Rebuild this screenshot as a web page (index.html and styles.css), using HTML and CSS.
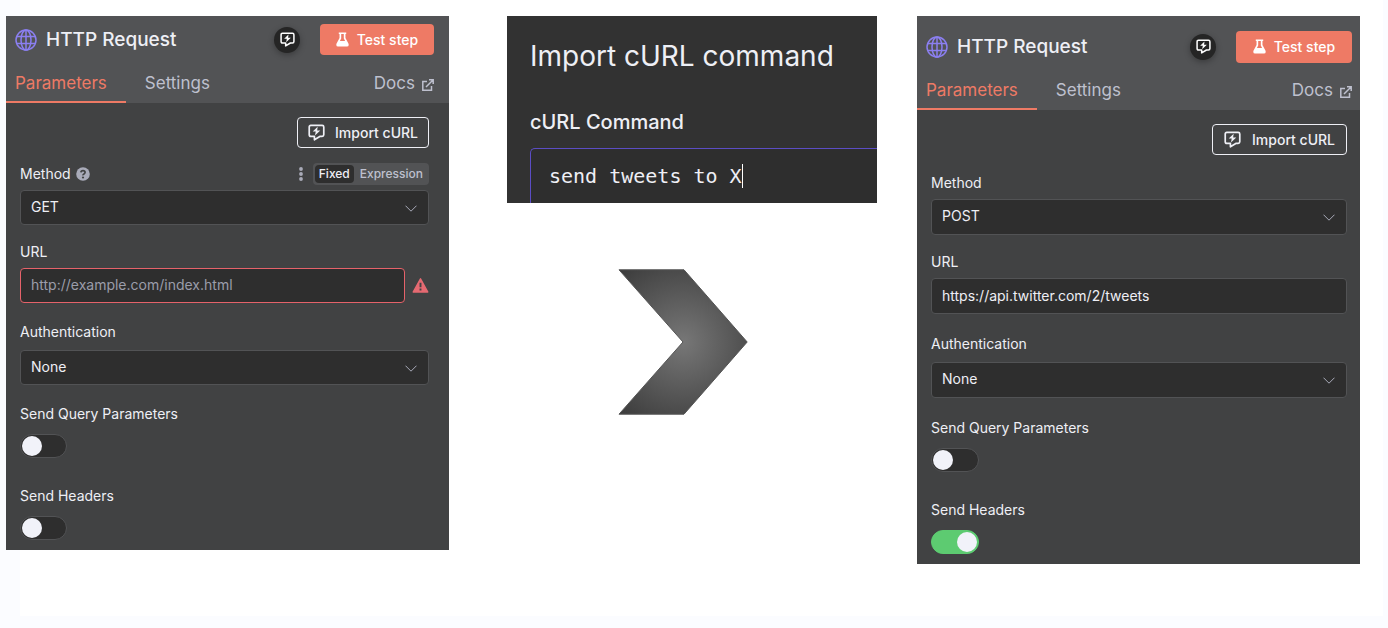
FILE: index.html
```
<!DOCTYPE html>
<html lang="en">
<head>
    <meta charset="UTF-8">
    <meta name="viewport" content="width=device-width, initial-scale=1.0">
    <title>HTTP Request - Import cURL</title>
    <link rel="stylesheet" href="styles.css">
</head>
<body>
    <!-- shared icons -->
    <svg class="sprite" aria-hidden="true">
        <symbol id="globe" viewBox="0 0 22 22">
            <g fill="none" stroke="currentColor" stroke-width="1.5">
                <circle cx="11" cy="11" r="10"/>
                <ellipse cx="11" cy="11" rx="5" ry="10"/>
                <path d="M11 1v20M2 7.5h18M2 14.5h18"/>
            </g>
        </symbol>
        <symbol id="bolt-chat" viewBox="0 0 18 18">
            <path d="M3 1.5h12q1.7 0 1.7 1.7v8.3q0 1.7-1.7 1.7h-2.500L6.800 16.700v-3.500H3q-1.700 0-1.700-1.700V3.200Q1.300 1.500 3 1.500z" fill="none" stroke="currentColor" stroke-width="1.8" stroke-linejoin="round"/>
            <path d="M10.200 3L5 8h3.200l-.8 4.300L13 7H9.700z" fill="currentColor"/>
        </symbol>
        <symbol id="flask" viewBox="0 0 14 16">
            <path d="M3 .5h8v1.600h-.8v4.400l3.300 6.200Q14.200 15.500 11.800 15.500H2.200Q-.2 15.500.5 12.700L3.800 6.500V2.100H3zM5.600 2.100v4.800L4.200 9.500h5.600L8.400 6.900V2.100z" fill="currentColor" fill-rule="evenodd"/>
        </symbol>
        <symbol id="external" viewBox="0 0 12 12">
            <path d="M5 2.500H.8v8.700h8.700V7M4 8l7-7M7 .8h4.200V5" fill="none" stroke="currentColor" stroke-width="1.500"/>
        </symbol>
        <symbol id="chevron" viewBox="0 0 12 7">
            <path d="M.5.700L6 6.200 11.500.7" fill="none" stroke="currentColor" stroke-width="1"/>
        </symbol>
    </svg>

    <main class="board">
        <section class="panel panel-before">
            <header class="panel-header">
                <div class="title-row">
                    <svg class="globe"><use href="#globe"/></svg>
                    <h2>HTTP Request</h2>
                    <button class="ask" type="button" aria-label="Ask assistant"><svg><use href="#bolt-chat"/></svg></button>
                    <button class="test" type="button"><svg><use href="#flask"/></svg>Test step</button>
                </div>
                <nav class="tabs">
                    <a class="tab active" href="#">Parameters</a>
                    <a class="tab" href="#">Settings</a>
                    <a class="docs" href="#">Docs <svg><use href="#external"/></svg></a>
                </nav>
            </header>
            <form class="panel-body">
                <button class="import" type="button"><svg><use href="#bolt-chat"/></svg>Import cURL</button>
                <div class="field compact first">
                    <div class="label-row">
                        <label for="method-a">Method</label>
                        <svg class="help" viewBox="0 0 14 14">
                            <circle cx="7" cy="7" r="6.800" fill="#a9abb9"/>
                            <path d="M4.900 5.400Q5 3.600 7 3.600T9.100 5.300Q9.100 6.300 8 6.900T7 8.400" fill="none" stroke="#414243" stroke-width="1.700"/>
                            <circle cx="7" cy="10.500" r="1.100" fill="#414243"/>
                        </svg>
                        <svg class="dots" viewBox="0 0 4 14"><circle cx="2" cy="2" r="1.900"/><circle cx="2" cy="7" r="1.900"/><circle cx="2" cy="12" r="1.900"/></svg>
                        <div class="mode">
                            <button class="on" type="button">Fixed</button>
                            <button type="button">Expression</button>
                        </div>
                    </div>
                    <div class="select">
                        <select id="method-a"><option>GET</option></select>
                        <svg><use href="#chevron"/></svg>
                    </div>
                </div>
                <div class="field compact">
                    <label for="url-a">URL</label>
                    <div class="invalid">
                        <input class="text" id="url-a" type="text" placeholder="http://example.com/index.html">
                        <svg class="warn" viewBox="0 0 16 15">
                            <path d="M8 .8L15.300 14H.7z" fill="#e56a72" stroke="#e56a72" stroke-width="1.400" stroke-linejoin="round"/>
                            <path d="M8 4.800v4.400M8 10.600v2" stroke="#414243" stroke-width="1.900"/>
                        </svg>
                    </div>
                </div>
                <div class="field">
                    <label for="auth-a">Authentication</label>
                    <div class="select">
                        <select id="auth-a"><option>None</option></select>
                        <svg><use href="#chevron"/></svg>
                    </div>
                </div>
                <div class="field">
                    <label for="query-a">Send Query Parameters</label>
                    <input class="switch" id="query-a" type="checkbox">
                </div>
                <div class="field after-switch">
                    <label for="headers-a">Send Headers</label>
                    <input class="switch" id="headers-a" type="checkbox">
                </div>
            </form>
        </section>

        <div class="middle">
            <section class="dialog">
                <h1>Import cURL command</h1>
                <label for="curl">cURL Command</label>
                <div class="editor">
                    <textarea id="curl" spellcheck="false">send tweets to X</textarea>
                    <span class="caret"></span>
                </div>
            </section>
            <svg class="arrow" viewBox="0 0 130 146">
                <defs>
                    <radialGradient id="steel" gradientUnits="userSpaceOnUse" cx="65" cy="73" r="98">
                        <stop offset="0" stop-color="#777"/>
                        <stop offset="1" stop-color="#3a3a3a"/>
                    </radialGradient>
                </defs>
                <path d="M1 .8h65L129.200 73 66 145.200H1L65 73z" fill="url(#steel)" stroke="#555" stroke-width="1"/>
            </svg>
        </div>

        <section class="panel panel-after">
            <header class="panel-header">
                <div class="title-row">
                    <svg class="globe"><use href="#globe"/></svg>
                    <h2>HTTP Request</h2>
                    <button class="ask" type="button" aria-label="Ask assistant"><svg><use href="#bolt-chat"/></svg></button>
                    <button class="test" type="button"><svg><use href="#flask"/></svg>Test step</button>
                </div>
                <nav class="tabs">
                    <a class="tab active" href="#">Parameters</a>
                    <a class="tab" href="#">Settings</a>
                    <a class="docs" href="#">Docs <svg><use href="#external"/></svg></a>
                </nav>
            </header>
            <form class="panel-body">
                <button class="import" type="button"><svg><use href="#bolt-chat"/></svg>Import cURL</button>
                <div class="field compact first">
                    <label for="method-b">Method</label>
                    <div class="select">
                        <select id="method-b"><option>POST</option></select>
                        <svg><use href="#chevron"/></svg>
                    </div>
                </div>
                <div class="field compact">
                    <label for="url-b">URL</label>
                    <input class="text" id="url-b" type="text" value="https://api.twitter.com/2/tweets">
                </div>
                <div class="field">
                    <label for="auth-b">Authentication</label>
                    <div class="select">
                        <select id="auth-b"><option>None</option></select>
                        <svg><use href="#chevron"/></svg>
                    </div>
                </div>
                <div class="field">
                    <label for="query-b">Send Query Parameters</label>
                    <input class="switch" id="query-b" type="checkbox">
                </div>
                <div class="field after-switch">
                    <label for="headers-b">Send Headers</label>
                    <input class="switch" id="headers-b" type="checkbox" checked>
                </div>
            </form>
        </section>
    </main>
</body>
</html>
```
FILE: styles.css
```
* { box-sizing: border-box; margin: 0; padding: 0; }
body { font-family: Inter, "Liberation Sans", sans-serif; font-size: 14px; line-height: 20px; background: #fbfcff; color: #eeeff5; }
button, input, select, textarea { font: inherit; color: inherit; }
button { border: none; cursor: pointer; }
a { text-decoration: none; }
svg { display: block; flex: none; }
.sprite { position: absolute; width: 0; height: 0; }

.board { display: flex; align-items: flex-start; min-height: calc(100vh - 12px); margin: 0 5px 12px 20px; padding: 16px 23px 16px 0; background: #fff; }

/* node panels */
.panel { --control: 35px; --gap: 19px; --left: 14px; --right: 20px; flex: 443 1 0; min-width: 0; background: #414243; }
.panel-before { margin-left: -14px; }
.panel-after { --control: 36px; --gap: 20px; --left: 14px; --right: 13px; }
.panel-header { background: #525355; }
.title-row { display: flex; align-items: center; height: 47px; padding: 0 15px 0 9px; }
.panel-after .title-row { height: 61px; padding-right: 8px; }
.globe { width: 22px; height: 22px; color: #8b7ff0; }
.title-row h2 { flex: 1; margin-left: 9px; font-size: 19px; line-height: 24px; font-weight: 500; }
.ask { display: flex; align-items: center; justify-content: center; width: 26px; height: 26px; margin-right: 20px; border-radius: 50%; background: #252525; color: #fff; box-shadow: 0 2px 6px rgba(0,0,0,0.3); }
.ask svg { width: 15px; height: 15px; }
.test { display: flex; align-items: center; justify-content: center; gap: 8px; width: 114px; height: 31px; border-radius: 4px; background: #ee7a65; color: #fff; font-weight: 500; }
.panel-after .test { width: 116px; height: 32px; }
.test svg { width: 13px; height: 15px; }

.tabs { display: flex; height: 40px; padding-right: 15px; font-size: 17px; line-height: 40px; }
.panel-after .tabs { height: 33px; padding-right: 8px; line-height: 26px; }
.tab { padding: 0 19px; color: #bec0ce; }
.tab.active { padding-left: 9px; border-bottom: 2px solid #ee7a65; color: #ee7a65; }
.docs { display: flex; gap: 7px; align-items: center; align-self: flex-start; margin-left: auto; color: #bec0ce; }
.docs svg { width: 12px; height: 12px; margin-top: 3px; }

.panel-body { display: flex; flex-direction: column; padding: 14px var(--right) 10px var(--left); }
.import { display: flex; align-items: center; align-self: flex-end; gap: 10px; height: 31px; padding: 0 10px; border: 1px solid #eeeff5; border-radius: 4px; background: none; font-weight: 500; }
.panel-after .import { gap: 11px; padding: 0 11px; }
.import svg { width: 17px; height: 17px; }
.field { display: flex; flex-direction: column; gap: 8px; margin-top: var(--gap); }
.field.compact { gap: 6px; margin-top: 17px; }
.panel-before .field.first { margin-top: 16px; }
.panel-after .field.first { margin-top: 18px; }
.field.after-switch { margin-top: 28px; }
.label-row { display: flex; align-items: center; height: 20px; }
.help { width: 14px; height: 14px; margin-left: 5px; }
.dots { width: 4px; height: 14px; margin-left: auto; fill: #a9abb9; }
.mode { display: flex; gap: 2px; margin-left: 10px; padding: 2px; border-radius: 4px; background: #525355; font-size: 12px; line-height: 18px; }
.mode button { padding: 0 4px; border-radius: 4px; background: none; color: #bec0ce; font-weight: 500; }
.mode .on { background: #2e2e2e; color: #eeeff5; }

.select { position: relative; }
.select select, .text { display: block; width: 100%; height: var(--control); padding: 0 10px 2px; border: 1px solid #525355; border-radius: 4px; background: #2e2e2e; outline: none; appearance: none; }
.select svg { position: absolute; top: calc(50% - 3px); right: 12px; width: 12px; height: 7px; color: #a9abb9; pointer-events: none; }
.invalid { display: flex; align-items: center; gap: 7px; }
.invalid .text { flex: 1; border-color: #e5626a; }
.text::placeholder { color: #9b9daa; opacity: 1; }
.warn { width: 17px; height: 15px; }

.switch { position: relative; width: 47px; height: 24px; margin-top: 2px; border: 1px solid #525355; border-radius: 12px; background: #2e2e2e; appearance: none; }
.switch::before { content: ''; position: absolute; top: 1px; left: 1px; width: 20px; height: 20px; border-radius: 50%; background: #f1f2f9; }
.panel-after .switch { width: 48px; }
.switch:checked { border-color: #5dcb71; background: #5dcb71; }
.switch:checked::before { left: auto; right: 1px; }

/* import dialog */
.middle { flex: 370 1 0; min-width: 0; margin: 0 40px 0 58px; }
.dialog { padding: 20px 0 0 23px; background: #323232; overflow: hidden; }
.dialog h1 { font-size: 28px; line-height: 40px; font-weight: 400; white-space: nowrap; }
.dialog label { display: block; margin-top: 34px; font-size: 20px; line-height: 24px; font-weight: 500; }
.editor { position: relative; height: 55px; margin-top: 14px; font-family: "DejaVu Sans Mono", monospace; font-size: 20px; line-height: 28px; }
.editor textarea { display: block; width: 100%; height: 100%; padding: 13px 18px 0; border: 1px solid #5b4dc4; border-width: 1px 0 0 1px; border-radius: 5px 0 0 0; background: #2e2e2e; outline: none; resize: none; overflow: hidden; }
.caret { position: absolute; top: 16px; left: calc(19px + 16ch); width: 1px; height: 24px; background: #fff; }
.arrow { width: 130px; height: 146px; margin: 66px 0 0 30%; }

@media (max-width: 900px) {
    .board { flex-direction: column; align-items: stretch; gap: 30px; }
    .panel, .middle { flex: none; }
}
```
